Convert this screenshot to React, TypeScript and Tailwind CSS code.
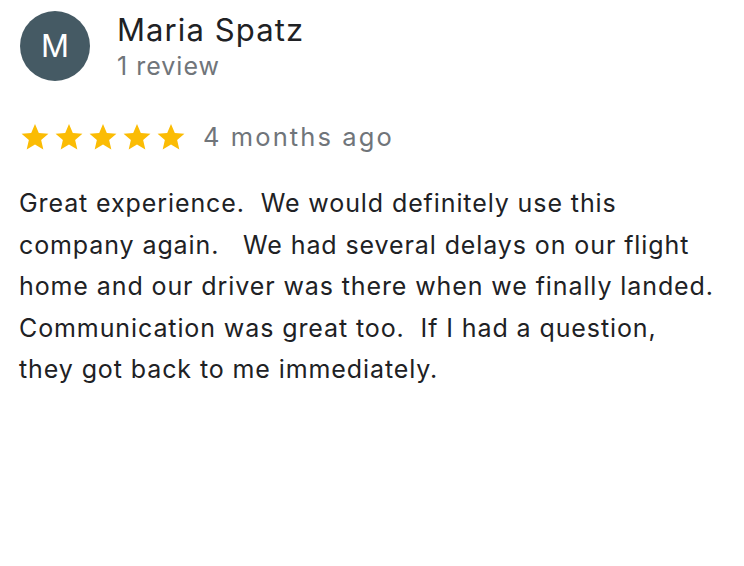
import { Fragment } from 'react'

// Google-style review card, one reviewer.

const lines = [
  'Great experience.  We would definitely use this',
  'company again.   We had several delays on our flight',
  'home and our driver was there when we finally landed.',
  'Communication was great too.  If I had a question,',
  'they got back to me immediately.',
]

function Star() {
  return (
    <svg viewBox="0 0 24 24" className="h-[30px] w-[30px]" aria-hidden>
      <path
        fill="#fbbc04"
        d="M12 1.6l3.05 7.1 7.7.66-5.84 5.06 1.75 7.53L12 17.97l-6.66 3.98 1.75-7.53L1.25 9.36l7.7-.66z"
      />
    </svg>
  )
}

export default function App() {
  return (
    <div className="min-h-[566px] w-[744px] bg-white font-['Inter','Roboto',sans-serif]">
      <div className="flex items-start gap-[27px] pl-[20px] pt-[11px]">
        <div className="flex h-[70px] w-[70px] items-center justify-center rounded-full bg-[#455a64] text-[31px] text-white">
          M
        </div>
        <div className="flex flex-col">
          <div className="-mt-[3px] text-[31px] leading-[43px] tracking-[1.1px] text-[#202124]">Maria Spatz</div>
          <div className="text-[25px] leading-[30px] tracking-[1px] text-[#70757a]">1 review</div>
        </div>
      </div>

      <div className="mt-[40px] flex items-center pl-[20px]">
        <div className="flex gap-[4px]">
          <Star />
          <Star />
          <Star />
          <Star />
          <Star />
        </div>
        <span className="ml-[17px] text-[25.5px] leading-[32px] tracking-[2.1px] text-[#70757a]">4 months ago</span>
      </div>

      <div className="mt-[30px] pl-[19px] whitespace-pre text-[25px] leading-[41.5px] tracking-[0.9px] text-[#202124]">
        {lines.map((l, i) => (
          <Fragment key={i}>
            {l}
            {i < lines.length - 1 && <br />}
          </Fragment>
        ))}
      </div>
    </div>
  )
}
